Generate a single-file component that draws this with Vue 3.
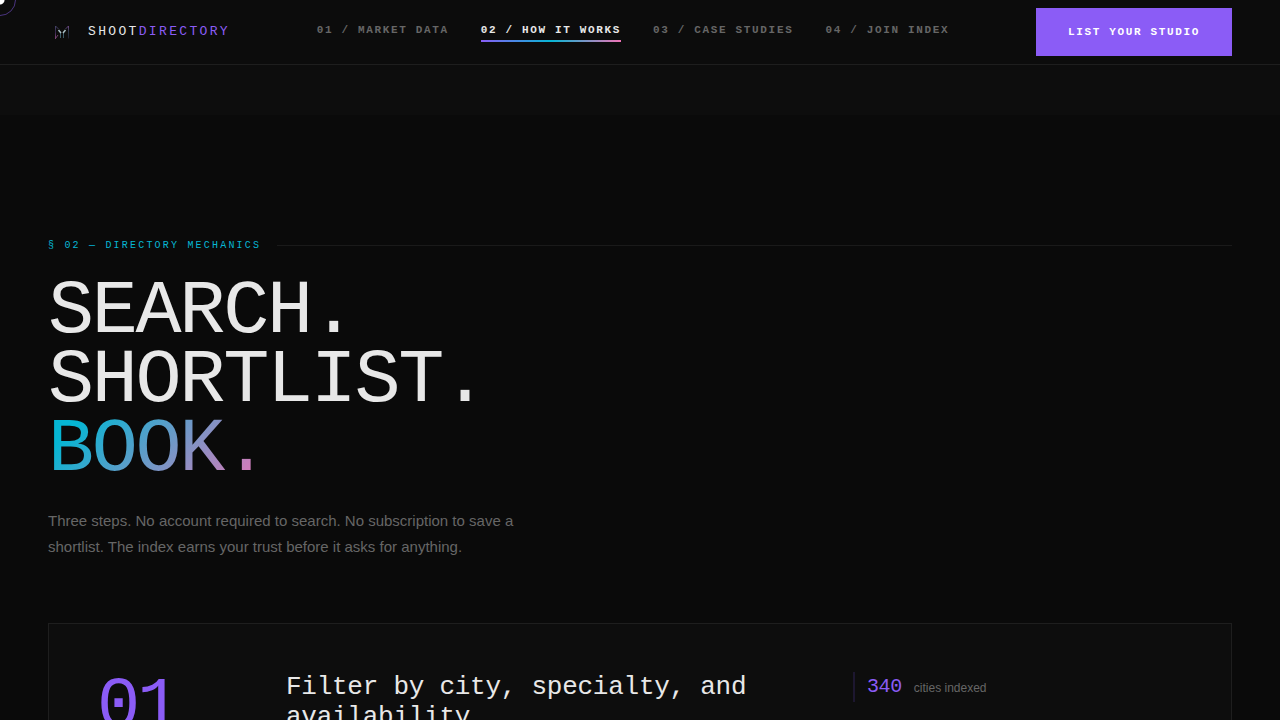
<script setup>
const links = [
  { label: '01 / MARKET DATA', href: '#market' },
  { label: '02 / HOW IT WORKS', href: '#how', active: true },
  { label: '03 / CASE STUDIES', href: '#cases' },
  { label: '04 / JOIN INDEX', href: '#join' },
]
</script>

<template>
  <div class="page">
    <header class="nav">
      <a class="brand" href="#top">
        <svg class="mark" viewBox="0 0 28 28" aria-hidden="true">
          <defs>
            <linearGradient id="markLeft" gradientUnits="userSpaceOnUse" x1="0" y1="7" x2="0" y2="21">
              <stop offset="0" stop-color="#4a4a6e" />
              <stop offset="0.5" stop-color="#33264a" />
              <stop offset="1" stop-color="#8c4680" />
            </linearGradient>
            <linearGradient id="markRight" gradientUnits="userSpaceOnUse" x1="0" y1="7" x2="0" y2="21">
              <stop offset="0" stop-color="#7a4a8c" />
              <stop offset="0.5" stop-color="#26384a" />
              <stop offset="1" stop-color="#201c2a" />
            </linearGradient>
          </defs>
          <path d="M7.500 21V8l3 3" fill="none" stroke="url(#markLeft)" />
          <path d="M17.500 11L20.500 8v12.500" fill="none" stroke="url(#markRight)" />
          <path d="M7.500 20.500l2.500-3.500" fill="none" stroke="#74406c" />
          <path d="M12.500 14.500v5.500M15.500 14.500v5.500" fill="none" stroke="#3d5c68" />
          <path d="M10.500 12l2.500 3M17.500 12L15 15" fill="none" stroke="#a9bfc4" stroke-width="1.500" />
        </svg>
        <span class="wordmark">SHOOT<span class="accent">DIRECTORY</span></span>
      </a>
      <nav class="links" aria-label="Sections">
        <a v-for="l in links" :key="l.href" :href="l.href" :class="{ active: l.active }">{{ l.label }}</a>
      </nav>
      <button class="cta" type="button">LIST YOUR STUDIO</button>
    </header>

    <div class="band"></div>

    <main class="section">
      <div class="eyebrow"><span>§ 02 — DIRECTORY MECHANICS</span></div>
      <h1>SEARCH.<br />SHORTLIST.<br /><span class="gradient">BOOK.</span></h1>
      <p class="lead">
        Three steps. No account required to search. No subscription to save a shortlist. The index
        earns your trust before it asks for anything.
      </p>
      <article class="step">
        <div class="number">01</div>
        <h2>Filter by city, specialty, and availability</h2>
        <div class="stat"><strong>340</strong><span>cities indexed</span></div>
      </article>
    </main>

    <div class="cursor" aria-hidden="true"></div>
  </div>
</template>

<style>
body {
  background: #0a0a0a;
}
</style>

<style scoped>
.page {
  --mono: "Liberation Mono", monospace;
  --violet: #8b5cf6;
  --line: #1e1e1e;
  position: relative;
  height: 100vh;
  overflow: hidden;
  background: #0a0a0a;
  color: #e8e8e8;
  font-family: "Liberation Sans", Arial, sans-serif;
}
.page * {
  box-sizing: border-box;
}
.nav {
  display: flex;
  align-items: center;
  justify-content: space-between;
  height: 65px;
  padding: 0 48px;
  background: #0c0c0c;
  border-bottom: 1px solid var(--line);
}
.brand {
  display: flex;
  align-items: center;
  gap: 12px;
  color: inherit;
  text-decoration: none;
}
.mark {
  width: 28px;
  height: 28px;
}
.wordmark {
  font: 13px/16px var(--mono);
  letter-spacing: 0.18em;
}
.accent {
  color: var(--violet);
}
.links {
  display: flex;
  gap: 32px;
  padding-bottom: 2px;
}
.links a {
  padding: 4px 0;
  border-bottom: 2px solid transparent;
  color: #666;
  font: bold 11px/12px var(--mono);
  letter-spacing: 0.15em;
  text-decoration: none;
}
.links a.active {
  color: #e8e8e8;
  border-image: linear-gradient(90deg, #8b5cf6, #06b6d4, #f472b6) 1;
  border-width: 0 0 2px;
}
.cta {
  height: 48px;
  padding: 0 32px;
  border: 0;
  background: var(--violet);
  color: #fff;
  font: bold 11px/12px var(--mono);
  letter-spacing: 0.15em;
}
.band {
  height: 50px;
  background: #0d0d0d;
}
.section {
  padding: 124px 48px 0;
}
.eyebrow {
  display: flex;
  align-items: center;
  gap: 16px;
  color: #06b6d4;
  font: 10px/13px var(--mono);
  letter-spacing: 0.22em;
}
.eyebrow::after {
  content: "";
  flex: 1;
  height: 1px;
  background: #1a1a1a;
}
h1 {
  margin: 25px 0 0;
  font: 400 clamp(40px, 6vw, 96px) / 0.9 var(--mono);
  letter-spacing: -0.03em;
}
.gradient {
  background: linear-gradient(135deg, #06b6d4 15%, #f472b6);
  -webkit-background-clip: text;
  background-clip: text;
  color: transparent;
}
.lead {
  max-width: 480px;
  margin: 24px 0 0;
  color: #666;
  font-size: 15px;
  line-height: 1.7;
}
.step {
  display: grid;
  grid-template-columns: 141px 1fr 330px;
  column-gap: 48px;
  align-items: start;
  margin-top: 64px;
  padding: 48px;
  background: #0d0d0d;
  border: 1px solid var(--line);
}
.number {
  color: var(--violet);
  font: 72px/72px var(--mono);
  letter-spacing: -0.04em;
}
h2 {
  margin: 0;
  font: 400 26px/30px var(--mono);
  letter-spacing: -0.01em;
}
.stat {
  display: flex;
  align-items: baseline;
  gap: 12px;
  padding-left: 12px;
  border-left: 2px solid #1d1730;
}
.stat strong {
  color: var(--violet);
  font: 20px/30px var(--mono);
  letter-spacing: -0.02em;
}
.stat span {
  color: #666;
  font-size: 12px;
  line-height: 20px;
}
.cursor {
  position: absolute;
  top: -16px;
  left: -16px;
  width: 32px;
  height: 32px;
  border: 1px solid #4b3580;
  border-radius: 50%;
  background: radial-gradient(circle, #fff 4px, transparent 5px);
}
</style>
